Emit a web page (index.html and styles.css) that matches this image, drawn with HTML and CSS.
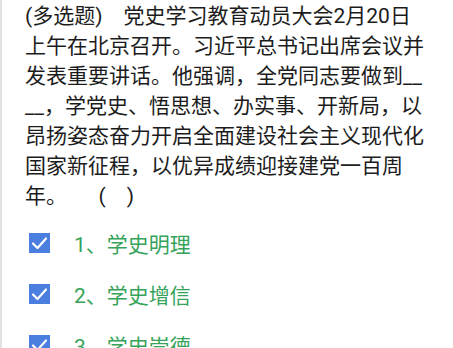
FILE: index.html
```html
<!DOCTYPE html>
<html lang="zh-CN">
<head>
<meta charset="utf-8">
<link rel="stylesheet" href="styles.css">
</head>
<body>
<div class="page">
  <div class="question">
    <span class="line">(多选题)　党史学习教育动员大会2月20日</span>
    <span class="line">上午在北京召开。习近平总书记出席会议并</span>
    <span class="line">发表重要讲话。他强调，全党同志要做到__</span>
    <span class="line">__，学党史、悟思想、办实事、开新局，以</span>
    <span class="line">昂扬姿态奋力开启全面建设社会主义现代化</span>
    <span class="line">国家新征程，以优异成绩迎接建党一百周</span>
    <span class="line">年。　　(　)</span>
  </div>
  <ul class="options">
    <li class="option">
      <span class="check"><svg viewBox="0 0 21 20" width="21" height="20"><path d="M4 10.5 L8.5 15 L17 5.5" fill="none" stroke="#fff" stroke-width="2.2" stroke-linecap="round" stroke-linejoin="round"/></svg></span>
      <span class="label">1、学史明理</span>
    </li>
    <li class="option">
      <span class="check"><svg viewBox="0 0 21 20" width="21" height="20"><path d="M4 10.5 L8.5 15 L17 5.5" fill="none" stroke="#fff" stroke-width="2.2" stroke-linecap="round" stroke-linejoin="round"/></svg></span>
      <span class="label">2、学史增信</span>
    </li>
    <li class="option">
      <span class="check"><svg viewBox="0 0 21 20" width="21" height="20"><path d="M4 10.5 L8.5 15 L17 5.5" fill="none" stroke="#fff" stroke-width="2.2" stroke-linecap="round" stroke-linejoin="round"/></svg></span>
      <span class="label">3、学史崇德</span>
    </li>
  </ul>
</div>
</body>
</html>
```
FILE: styles.css
```css
html, body {
  margin: 0;
  padding: 0;
  background: #fff;
  overflow: hidden;
}
.page {
  height: 348px;
  border-left: 2px solid #e2e2e2;
  padding: 1px 0 0 23px;
  box-sizing: border-box;
  font-family: Roboto, "Noto Sans CJK SC", sans-serif;
  color: #1c1c1c;
}
.question {
  font-size: 21px;
  line-height: 30px;
}
.line {
  display: block;
  white-space: nowrap;
}
.options {
  list-style: none;
  margin: 6px 0 0 0;
  padding: 0;
}
.option {
  display: flex;
  align-items: center;
  height: 51px;
  padding-left: 4px;
}
.check {
  width: 21px;
  height: 20px;
  background: #4a7fe0;
  display: flex;
}
.label {
  margin-left: 24px;
  font-size: 21px;
  color: #35a35a;
}
```
